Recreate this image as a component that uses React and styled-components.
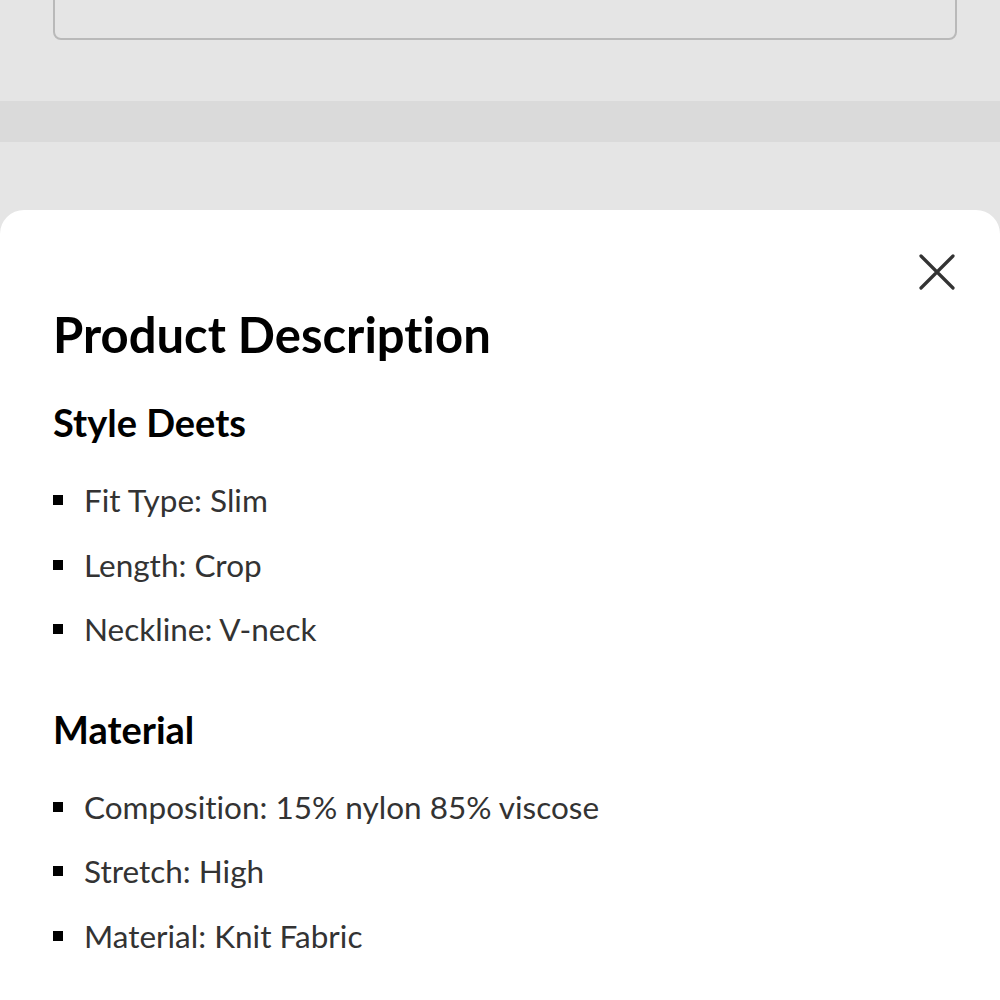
import React from "react";
import styled, { createGlobalStyle } from "styled-components";

const GlobalStyle = createGlobalStyle`
  html, body {
    margin: 0;
    padding: 0;
    background: #e5e5e5;
    font-family: Lato, "Open Sans", sans-serif;
    font-variant-ligatures: none;
  }
`;

const Page = styled.div`
  width: 1000px;
  height: 1000px;
  overflow: hidden;
  display: flex;
  flex-direction: column;
  background: #e5e5e5;
`;

const TopArea = styled.div`
  padding: 0 43px 0 53px;
  height: 101px;
`;

const SelectBox = styled.div`
  margin-top: -40px;
  height: 76px;
  border: 2px solid #b9b9b9;
  border-radius: 8px;
`;

const Band = styled.div`
  height: 41px;
  background: #dadada;
`;

const Spacer = styled.div`
  height: 68px;
`;

const Sheet = styled.div`
  flex: 1;
  background: #fff;
  border-radius: 24px 24px 0 0;
  padding: 42px 53px 0;
  display: flex;
  flex-direction: column;
`;

const CloseRow = styled.div`
  display: flex;
  justify-content: flex-end;
  margin-right: -10px;
  height: 38px;
`;

const CloseButton = styled.button`
  background: none;
  border: none;
  padding: 0;
  width: 40px;
  height: 40px;
  cursor: pointer;
`;

const Title = styled.h1`
  margin: 16px 0 0;
  font-size: 49px;
  font-weight: 700;
  color: #000;
  line-height: 56px;
`;

const SectionTitle = styled.h2`
  margin: ${(p) => p.$top}px 0 0;
  font-size: 38px;
  font-weight: 700;
  color: #000;
  line-height: 46px;
`;

const List = styled.ul`
  list-style: none;
  margin: 23px 0 0;
  padding: 0;
  display: flex;
  flex-direction: column;
`;

const Item = styled.li`
  display: flex;
  align-items: center;
  height: 64.5px;
  font-size: 31.5px;
  color: #333;
  &::before {
    content: "";
    flex: none;
    width: 10px;
    height: 10px;
    background: #000;
    margin-right: 21px;
  }
`;

const sections = [
  {
    title: "Style Deets",
    top: 37,
    items: ["Fit Type: Slim", "Length: Crop", "Neckline: V-neck"],
  },
  {
    title: "Material",
    top: 44,
    items: [
      "Composition: 15% nylon 85% viscose",
      "Stretch: High",
      "Material: Knit Fabric",
    ],
  },
];

export default function App() {
  return (
    <>
      <GlobalStyle />
      <Page>
        <TopArea>
          <SelectBox />
        </TopArea>
        <Band />
        <Spacer />
        <Sheet>
          <CloseRow>
            <CloseButton aria-label="Close">
              <svg width="40" height="40" viewBox="0 0 40 40">
                <path
                  d="M4 4 L36 36 M36 4 L4 36"
                  stroke="#333"
                  strokeWidth="3.2"
                  strokeLinecap="round"
                />
              </svg>
            </CloseButton>
          </CloseRow>
          <Title>Product Description</Title>
          {sections.map((s) => (
            <React.Fragment key={s.title}>
              <SectionTitle $top={s.top}>{s.title}</SectionTitle>
              <List>
                {s.items.map((it) => (
                  <Item key={it}>{it}</Item>
                ))}
              </List>
            </React.Fragment>
          ))}
        </Sheet>
      </Page>
    </>
  );
}
